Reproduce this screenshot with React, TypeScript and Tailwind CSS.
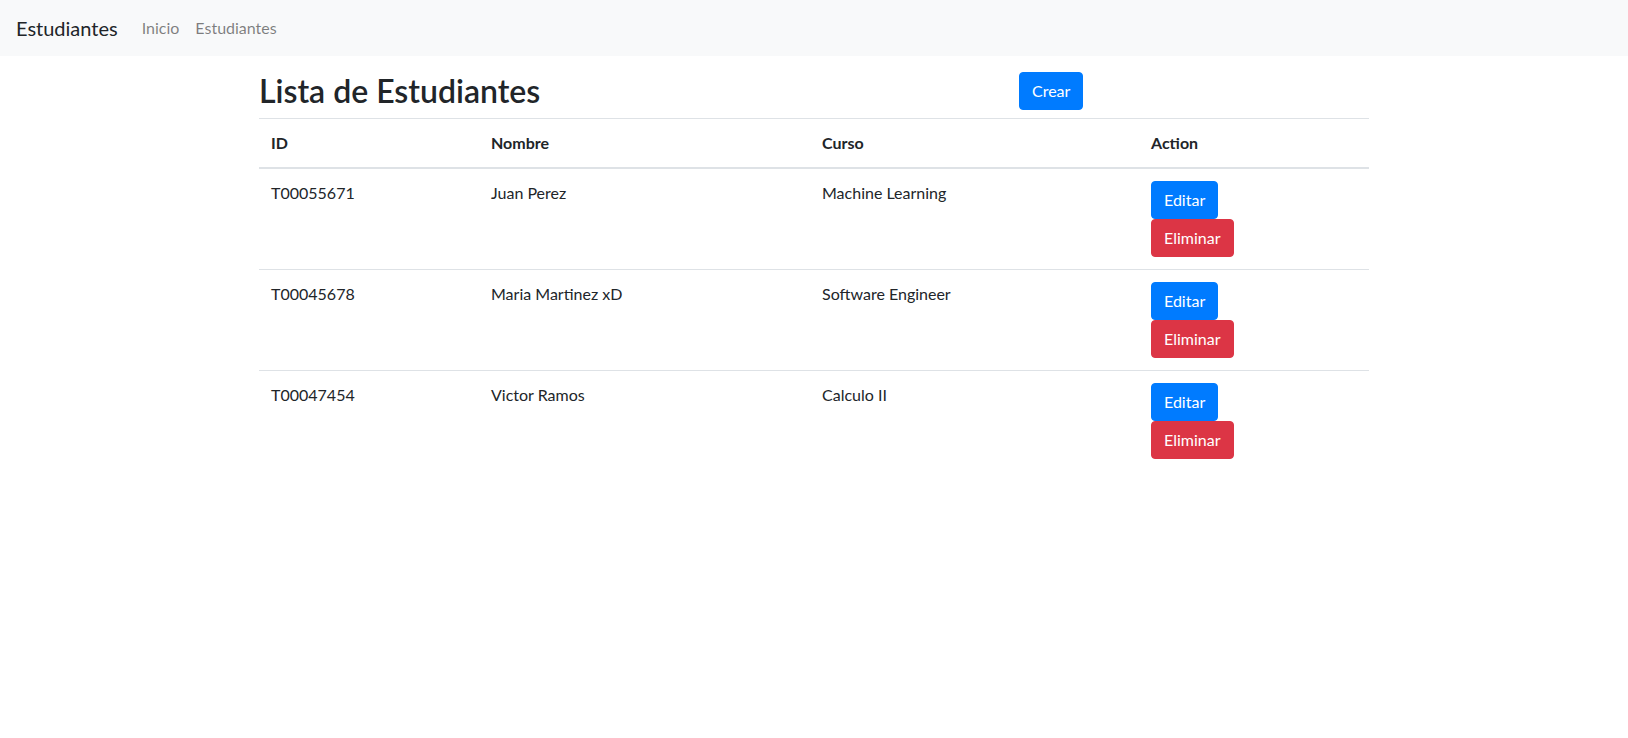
import React from "react";

const estudiantes = [
  { id: "T00055671", nombre: "Juan Perez", curso: "Machine Learning" },
  { id: "T00045678", nombre: "Maria Martinez xD", curso: "Software Engineer" },
  { id: "T00047454", nombre: "Victor Ramos", curso: "Calculo II" },
];

function Navbar() {
  return (
    <nav className="flex items-center h-14 px-4 bg-[#f8f9fa]">
      <a className="text-xl leading-[30px] py-[5px] mr-4 text-[#212529]">Estudiantes</a>
      <a className="px-2 py-2 text-base leading-6 text-black/50">Inicio</a>
      <a className="px-2 py-2 text-base leading-6 text-black/50">Estudiantes</a>
    </nav>
  );
}

function App() {
  return (
    <div
      className="min-h-screen bg-white text-[#212529]"
      style={{ fontFamily: 'Lato, "Noto Sans", sans-serif' }}
    >
      <Navbar />
      <div className="w-[1140px] mx-auto px-[15px] mt-4">
        <div className="flex -mx-[15px]">
          <div className="w-[760px] px-[15px]">
            <h2 className="text-[32px] leading-[38.4px] font-semibold mb-2">Lista de Estudiantes</h2>
          </div>
          <div className="w-[380px] px-[15px]">
            <button className="bg-[#007bff] text-white text-base leading-6 px-3 py-[6px] rounded border border-[#007bff]">
              Crear
            </button>
          </div>
        </div>
        <table className="w-full border-collapse text-base leading-6">
          <thead>
            <tr>
              <th className="w-[220px] text-left font-bold p-3 border-t border-b-2 border-[#dee2e6]">ID</th>
              <th className="w-[331px] text-left font-bold p-3 border-t border-b-2 border-[#dee2e6]">Nombre</th>
              <th className="w-[329px] text-left font-bold p-3 border-t border-b-2 border-[#dee2e6]">Curso</th>
              <th className="text-left font-bold p-3 border-t border-b-2 border-[#dee2e6]">Action</th>
            </tr>
          </thead>
          <tbody>
            {estudiantes.map((e, i) => (
              <tr key={e.id}>
                <td className={`p-3 align-top ${i > 0 ? "border-t border-[#dee2e6]" : ""}`}>{e.id}</td>
                <td className={`p-3 align-top ${i > 0 ? "border-t border-[#dee2e6]" : ""}`}>{e.nombre}</td>
                <td className={`p-3 align-top ${i > 0 ? "border-t border-[#dee2e6]" : ""}`}>{e.curso}</td>
                <td className={`p-3 align-top ${i > 0 ? "border-t border-[#dee2e6]" : ""}`}>
                  <div className="flex flex-col items-start">
                    <button className="bg-[#007bff] text-white text-base leading-6 px-3 py-[6px] rounded border border-[#007bff]">
                      Editar
                    </button>
                    <button className="bg-[#dc3545] text-white text-base leading-6 px-3 py-[6px] rounded border border-[#dc3545]">
                      Eliminar
                    </button>
                  </div>
                </td>
              </tr>
            ))}
          </tbody>
        </table>
      </div>
    </div>
  );
}

export default App;
